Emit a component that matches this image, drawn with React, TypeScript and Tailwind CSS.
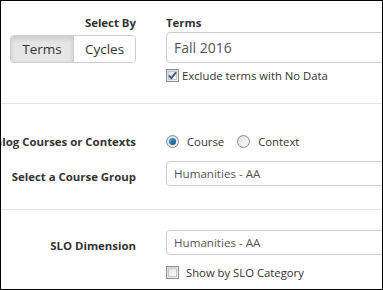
import React from "react";

function CheckBox({ checked }: { checked?: boolean }) {
  return (
    <span className="relative inline-block h-[13px] w-[13px] shrink-0 border border-[#8f8f8f] bg-gradient-to-br from-[#dcdcdc] to-[#f6f6f6]">
      <span className="absolute inset-[1px] border border-[#c8c8c8] bg-gradient-to-br from-[#e3e3e3] to-[#fbfbfb]" />
      {checked && (
        <svg viewBox="0 0 11 11" className="absolute left-0 top-0 h-[11px] w-[11px]">
          <path d="M2 5.5 L4.3 8.2 L9 2.2" fill="none" stroke="#3c4f92" strokeWidth="1.8" strokeLinejoin="round" />
        </svg>
      )}
    </span>
  );
}

function Radio({ checked }: { checked?: boolean }) {
  return (
    <span className="relative inline-flex h-[13px] w-[13px] shrink-0 items-center justify-center rounded-full border border-[#8c8c8c] bg-gradient-to-br from-[#d9d9d9] to-[#f8f8f8]">
      {checked ? (
        <span className="h-[7px] w-[7px] rounded-full bg-gradient-to-br from-[#4aa3dc] to-[#0a4e8c]" />
      ) : (
        <span className="h-[9px] w-[9px] rounded-full bg-gradient-to-br from-[#e4e4e4] to-[#fafafa]" />
      )}
    </span>
  );
}

const label = "text-right text-[11.4px] font-bold leading-[17px] text-[#333] whitespace-nowrap";

export default function App() {
  return (
    <div
      className="h-[290px] w-[383px] overflow-hidden border border-black bg-white text-[#333]"
      style={{ fontFamily: '"Open Sans", "Noto Sans", sans-serif' }}
    >
      {/* Select by */}
      <section className="grid h-[103px] grid-cols-[135px_1fr] gap-x-[30px] border-b border-[#e5e5e5] pt-[13px]">
        <div className="flex flex-col items-end">
          <div className={label}>Select By</div>
          <div className="mt-[4px] flex h-[28px] w-[126px] overflow-hidden rounded-[4px] border border-[#ccc] text-[13.5px] text-[#333]">
            <div className="flex w-[63px] items-center justify-center border-r border-[#ccc] bg-[#e6e6e6] shadow-[inset_0_3px_5px_rgba(0,0,0,0.125)]">
              Terms
            </div>
            <div className="flex flex-1 items-center justify-center bg-white">Cycles</div>
          </div>
        </div>
        <div className="flex flex-col">
          <div className="text-[11.4px] font-bold leading-[17px] text-[#333]">Terms</div>
          <div className="mt-[1px] flex h-[31px] w-[260px] items-center rounded-[4px] border border-[#ccc] pl-[7px] text-[14px] text-[#555]">
            Fall 2016
          </div>
          <label className="mt-[4px] flex items-center gap-[3px] text-[11.3px] leading-[17px] text-[#333]">
            <CheckBox checked />
            Exclude terms with No Data
          </label>
        </div>
      </section>

      {/* Courses */}
      <section className="h-[106px] border-b border-[#e5e5e5] pt-[29px]">
        <div className="grid grid-cols-[135px_1fr] items-center gap-x-[30px]">
          <div className="flex justify-end overflow-visible">
            <div className={label}>Catalog Courses or Contexts</div>
          </div>
          <div className="flex items-center text-[11.3px] leading-[17px] text-[#333]">
            <Radio checked />
            <span className="ml-[8px]">Course</span>
            <span className="ml-[13px]"><Radio /></span>
            <span className="ml-[8px]">Context</span>
          </div>
        </div>
        <div className="mt-[11px] grid grid-cols-[135px_1fr] items-start gap-x-[30px]">
          <div className={label + " pt-[7px]"}>Select a Course Group</div>
          <div className="flex h-[25px] w-[260px] items-center rounded-[4px] border border-[#ccc] pl-[7px] text-[11.6px] text-[#555]">
            Humanities - AA
          </div>
        </div>
      </section>

      {/* SLO */}
      <section className="grid grid-cols-[135px_1fr] gap-x-[30px] pt-[20px]">
        <div className={label + " pt-[7px]"}>SLO Dimension</div>
        <div className="flex flex-col">
          <div className="flex h-[25px] w-[260px] items-center rounded-[4px] border border-[#ccc] pl-[7px] text-[11.6px] text-[#555]">
            Humanities - AA
          </div>
          <label className="mt-[9px] flex items-center gap-[7px] text-[11.3px] leading-[17px] text-[#333]">
            <CheckBox />
            Show by SLO Category
          </label>
        </div>
      </section>
    </div>
  );
}
